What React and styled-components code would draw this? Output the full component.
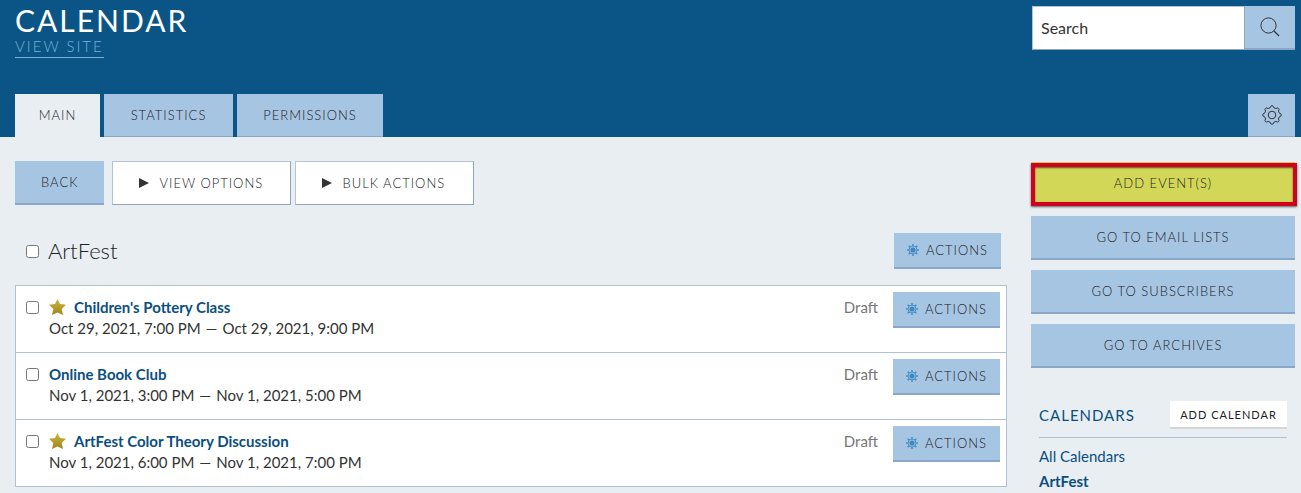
import styled, { createGlobalStyle, css } from 'styled-components';

const events = [
    { id: 1, title: "Children's Pottery Class", start: 'Oct 29, 2021, 7:00 PM', end: 'Oct 29, 2021, 9:00 PM', starred: true },
    { id: 2, title: 'Online Book Club', start: 'Nov 1, 2021, 3:00 PM', end: 'Nov 1, 2021, 5:00 PM', starred: false },
    { id: 3, title: 'ArtFest Color Theory Discussion', start: 'Nov 1, 2021, 6:00 PM', end: 'Nov 1, 2021, 7:00 PM', starred: true },
];

const SearchIcon = () => (
    <svg width="20" height="20" viewBox="0 0 20 20" fill="none" stroke="#333" strokeWidth="1" aria-hidden="true">
        <circle cx="8.5" cy="8.5" r="7.6" />
        <path d="M14 14l5 5" strokeWidth="1.3" />
    </svg>
);

/* eight lobes round a small ring */
const SettingsIcon = () => (
    <svg width="20" height="20" viewBox="0 0 20 20" fill="none" stroke="#333" strokeWidth="1" strokeLinejoin="round" aria-hidden="true">
        <path d="M8.2 2.7 Q8.4 .7 10 .7 T11.8 2.7 L13.9 3.6 Q15.5 2.3 16.6 3.4 T16.4 6.1 L17.3 8.2 Q19.3 8.4 19.3 10 T17.3 11.8 L16.4 13.9 Q17.7 15.5 16.6 16.6 T13.9 16.4 L11.8 17.3 Q11.6 19.3 10 19.3 T8.2 17.3 L6.1 16.4 Q4.5 17.7 3.4 16.6 T3.6 13.9 L2.7 11.8 Q.7 11.6 .7 10 T2.7 8.2 L3.6 6.1 Q2.3 4.5 3.4 3.4 T6.1 3.6 Z" />
        <circle cx="10" cy="10" r="3.8" />
    </svg>
);

const CogIcon = () => (
    <svg width="12" height="12" viewBox="0 0 12 12" fill="none" stroke="#4a90c8" aria-hidden="true">
        <circle cx="6" cy="6" r="4" strokeWidth="1" />
        <path strokeWidth="1.6" d="M6 0v2M6 10v2M0 6h2M10 6h2M1.7 1.7l1.4 1.4M8.9 8.9l1.4 1.4M1.7 10.3l1.4-1.4M8.9 3.1l1.4-1.4" />
        <circle cx="6" cy="6" r="2.6" fill="#3f88c2" stroke="none" />
    </svg>
);

const StarIcon = () => (
    <svg width="17" height="17" viewBox="0 0 17 17" aria-hidden="true">
        <defs>
            <linearGradient id="gold" x1="0" y1="0" x2="0" y2="1">
                <stop offset="0" stopColor="#cdb53a" />
                <stop offset="1" stopColor="#9f861f" />
            </linearGradient>
        </defs>
        <path fill="url(#gold)" d="M8.5 0l2.5 5.1 6 .6-4.3 4.2 1.3 6.1-5.5-2.6-5.5 2.6 1.3-6.1-4.3-4.2 6-.6z" />
    </svg>
);

const App = () => {
    return (
        <>
            <GlobalStyle />
            <Header>
                <HeaderTop>
                    <div>
                        <Title>CALENDAR</Title>
                        <SiteLink href="#site">VIEW SITE</SiteLink>
                    </div>
                    <SearchForm role="search">
                        <SearchInput type="text" placeholder="Search" aria-label="Search" />
                        <SearchButton type="button" aria-label="Run search"><SearchIcon /></SearchButton>
                    </SearchForm>
                </HeaderTop>
                <Tabs>
                    <Tab href="#main" $width={85} $active>MAIN</Tab>
                    <Tab href="#statistics" $width={129}>STATISTICS</Tab>
                    <Tab href="#permissions" $width={146}>PERMISSIONS</Tab>
                    <SettingsButton type="button" aria-label="Settings"><SettingsIcon /></SettingsButton>
                </Tabs>
            </Header>

            <Content>
                <Main>
                    <Toolbar>
                        <Button type="button">BACK</Button>
                        <ToggleGroup>
                            <ToggleButton type="button"><Arrow />VIEW OPTIONS</ToggleButton>
                            <ToggleButton type="button"><Arrow />BULK ACTIONS</ToggleButton>
                        </ToggleGroup>
                    </Toolbar>

                    <GroupHeader>
                        <Checkbox type="checkbox" id="group" />
                        <GroupLabel htmlFor="group">ArtFest</GroupLabel>
                        <ActionsButton type="button"><CogIcon />ACTIONS</ActionsButton>
                    </GroupHeader>

                    <EventList>
                        {events.map((event) => (
                            <EventRow key={event.id}>
                                <Checkbox type="checkbox" aria-label={event.title} />
                                <EventInfo>
                                    <EventTitle>
                                        {event.starred && <StarIcon />}
                                        <EventLink href={`#event-${event.id}`}>{event.title}</EventLink>
                                    </EventTitle>
                                    <EventDates>
                                        <span>{event.start}</span>
                                        <span>—</span>
                                        <span>{event.end}</span>
                                    </EventDates>
                                </EventInfo>
                                <Status>Draft</Status>
                                <ActionsButton type="button"><CogIcon />ACTIONS</ActionsButton>
                            </EventRow>
                        ))}
                    </EventList>
                </Main>

                <Sidebar>
                    <SideButtons>
                        <AddButton type="button">ADD EVENT(S)</AddButton>
                        <Button type="button">GO TO EMAIL LISTS</Button>
                        <Button type="button">GO TO SUBSCRIBERS</Button>
                        <Button type="button">GO TO ARCHIVES</Button>
                    </SideButtons>
                    <Calendars>
                        <CalendarsHeader>
                            <CalendarsTitle>CALENDARS</CalendarsTitle>
                            <AddCalendar type="button">ADD CALENDAR</AddCalendar>
                        </CalendarsHeader>
                        <CalendarLink href="#all">All Calendars</CalendarLink>
                        <CalendarLink href="#artfest" $current>ArtFest</CalendarLink>
                    </Calendars>
                </Sidebar>
            </Content>
        </>
    );
};

export default App;

const GlobalStyle = createGlobalStyle`
    * {
        box-sizing: border-box;
    }
    body {
        margin: 0;
        background-color: #e8eef2;
        color: #222;
        font-family: Lato, "Open Sans", sans-serif;
        font-size: 15px;
        font-weight: 300;
        line-height: 21px;
    }
    button, input {
        margin: 0;
        font-family: inherit;
        font-weight: inherit;
        color: inherit;
    }
    a {
        text-decoration: none;
    }
`

const caps = css`
    font-size: 13px;
    line-height: 20px;
    letter-spacing: 1px;
`

/*header*/
const Header = styled.header`
    background-color: #0b5586;
    padding: 0 6px 0 15px;
`

const HeaderTop = styled.div`
    display: flex;
    justify-content: space-between;
    align-items: flex-start;
    height: 94px;
    padding-top: 6px;
`

const Title = styled.h1`
    margin: 0 0 2px;
    color: #fff;
    font-size: 30px;
    font-weight: 400;
    line-height: 28px;
    letter-spacing: 2px;
`

const SiteLink = styled.a`
    display: inline-block;
    color: #79afd8;
    border-bottom: 1px solid #79afd8;
    letter-spacing: 2px;
`

const SearchForm = styled.form`
    display: flex;
    width: 263px;
    height: 44px;
`

const SearchInput = styled.input`
    flex: 1;
    min-width: 0;
    padding: 0 8px 2px;
    border: 1px solid #b4c4d6;
    border-right-color: #8fa5bd;
    border-bottom-color: #8fa5bd;
    border-radius: 0;
    background-color: #fff;
    font-size: 16px;
    font-weight: 400;
    &::placeholder {
        color: #333;
        opacity: 1;
    }
`

const SearchButton = styled.button`
    display: flex;
    justify-content: center;
    align-items: center;
    width: 50px;
    padding: 0;
    border: 0;
    border-bottom: 2px solid #8ba7c7;
    background-color: #a6c5e3;
`

const Tabs = styled.nav`
    display: flex;
    gap: 4px;
`

const Tab = styled.a`
    ${caps}
    min-width: ${({ $width }) => $width}px;
    padding: 11px 12px;
    text-align: center;
    color: #222;
    background-color: ${({ $active }) => ($active ? '#e8eef2' : '#a6c5e3')};
    border-bottom: 1px solid ${({ $active }) => ($active ? '#e8eef2' : '#8ba7c7')};
`

const SettingsButton = styled.button`
    display: flex;
    justify-content: center;
    align-items: center;
    width: 47px;
    margin-left: auto;
    padding: 0;
    border: 0;
    border-bottom: 1px solid #8ba7c7;
    background-color: #a6c5e3;
`

/*buttons*/
const Button = styled.button`
    ${caps}
    height: 44px;
    padding: 0 26px;
    border: 0;
    border-bottom: 2px solid #8ba7c7;
    background-color: #a6c5e3;
`

const ToggleButton = styled.button`
    ${caps}
    display: flex;
    align-items: center;
    gap: 10px;
    min-width: 179px;
    height: 44px;
    padding: 0 26px;
    border: 1px solid #b4c4d6;
    border-right-color: #8fa5bd;
    border-bottom-color: #8fa5bd;
    background-color: #fff;
`

const Arrow = styled.span`
    border-left: 10px solid #333;
    border-top: 5px solid transparent;
    border-bottom: 5px solid transparent;
`

const ActionsButton = styled.button`
    ${caps}
    display: flex;
    align-items: center;
    justify-content: center;
    gap: 7px;
    min-width: 107px;
    height: 36px;
    padding: 0 12px;
    border: 0;
    border-bottom: 2px solid #8ba7c7;
    background-color: #a6c5e3;
`

const AddButton = styled(Button)`
    position: relative;
    background-color: #d3d758;
    border-bottom-color: #b6ba45;
    /*highlight frame over the button*/
    &::after {
        content: "";
        position: absolute;
        top: 1px;
        right: -2px;
        bottom: -2px;
        left: 0;
        border: 4px solid #d0021f;
        box-shadow: 0 1px 2px rgba(0, 0, 0, 0.6), inset 0 1px 2px rgba(0, 0, 0, 0.6);
    }
`

/*content*/
const Content = styled.div`
    display: flex;
    gap: 24px;
    padding: 24px 6px 0 15px;
`

const Main = styled.main`
    flex: 1;
    min-width: 0;
`

const Toolbar = styled.div`
    display: flex;
    gap: 8px;
`

const ToggleGroup = styled.div`
    display: flex;
    gap: 4px;
`

const Checkbox = styled.input`
    flex: none;
    width: 13px;
    height: 13px;
`

const GroupHeader = styled.div`
    display: flex;
    align-items: center;
    padding: 28px 6px 16px 11px;
`

const GroupLabel = styled.label`
    flex: 1;
    margin-left: 9px;
    font-size: 22px;
    line-height: 28px;
`

const EventList = styled.ul`
    margin: 0;
    padding: 0;
    list-style: none;
    border: 1px solid #b0c1d6;
    background-color: #fff;
`

const EventRow = styled.li`
    display: flex;
    align-items: flex-start;
    padding: 6px 6px 24px 10px;
    & + & {
        border-top: 1px solid #b0c1d6;
    }
    ${Checkbox} {
        margin-top: 9px;
    }
`

const EventInfo = styled.div`
    flex: 1;
    height: 36px;
    margin-left: 10px;
    padding-top: 5px;
`

const EventTitle = styled.div`
    display: flex;
    align-items: center;
    gap: 8px;
`

const EventLink = styled.a`
    color: #0b4f80;
    font-weight: 700;
`

const EventDates = styled.div`
    display: flex;
    gap: 5px;
    color: #333;
    font-weight: 400;
`

const Status = styled.span`
    margin: 5px 15px 0 0;
    color: #777;
    font-weight: 400;
`

/*sidebar*/
const Sidebar = styled.aside`
    width: 264px;
`

const SideButtons = styled.div`
    display: flex;
    flex-direction: column;
    gap: 10px;
    padding-top: 1px;
`

const Calendars = styled.section`
    padding: 33px 8px 0;
`

const CalendarsHeader = styled.div`
    display: flex;
    justify-content: space-between;
    align-items: center;
    margin-bottom: 8px;
    padding-bottom: 8px;
    border-bottom: 1px solid #b0c1d6;
`

const CalendarsTitle = styled.h2`
    margin: 0;
    color: #0b4f80;
    font-size: 15px;
    font-weight: 400;
    letter-spacing: 1px;
`

const AddCalendar = styled.button`
    min-width: 117px;
    height: 28px;
    padding: 0 8px;
    border: 0;
    border-bottom: 2px solid #d4d6d8;
    background-color: #fff;
    font-size: 11px;
    font-weight: 400;
    letter-spacing: 1px;
`

const CalendarLink = styled.a`
    display: block;
    margin-bottom: 4px;
    color: #0b4f80;
    font-weight: ${({ $current }) => ($current ? 700 : 400)};
    &:last-child {
        margin-bottom: 0;
    }
`
